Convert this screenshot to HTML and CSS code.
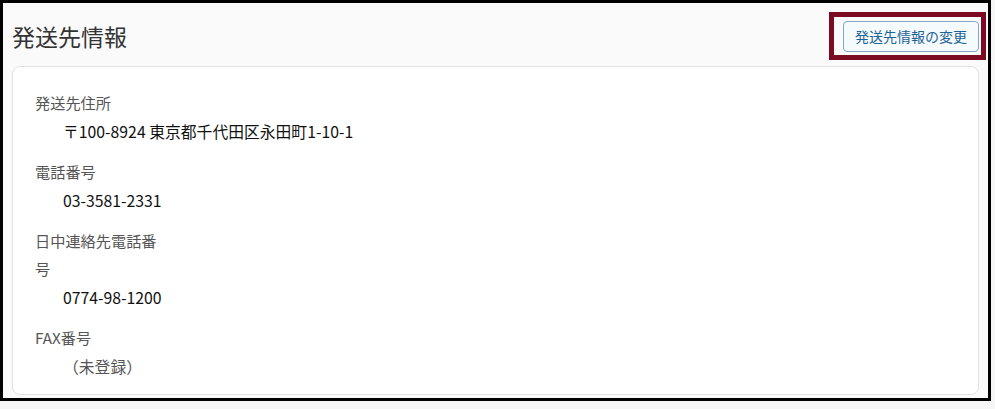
FILE: index.html
```html
<!DOCTYPE html>
<html lang="ja">
<head>
    <meta charset="UTF-8">
    <meta name="viewport" content="width=device-width, initial-scale=1.0">
    <title>発送先情報</title>
    <link rel="stylesheet" href="styles.css">
</head>
<body>
    <div class="frame">
        <div class="section-header">
            <h2 class="section-title">発送先情報</h2>
            <button type="button" class="edit-button">発送先情報の変更</button>
            <!-- 強調枠 -->
            <span class="highlight"></span>
        </div>
        <div class="card">
            <dl class="info-list">
                <div class="info-row">
                    <dt>発送先住所</dt>
                    <dd>〒100-8924 東京都千代田区永田町1-10-1</dd>
                </div>
                <div class="info-row">
                    <dt>電話番号</dt>
                    <dd>03-3581-2331</dd>
                </div>
                <div class="info-row">
                    <dt>日中連絡先電話番号</dt>
                    <dd>0774-98-1200</dd>
                </div>
                <div class="info-row">
                    <dt>FAX番号</dt>
                    <dd class="empty">（未登録）</dd>
                </div>
            </dl>
        </div>
    </div>
</body>
</html>
```

FILE: styles.css
```css
* {
    box-sizing: border-box;
    font-family: 'Noto Sans CJK JP', 'Noto Sans', sans-serif;
}

body {
    margin: 0;
    background-color: #f6f6f6;
}

.frame {
    width: 991px;
    height: 401px;
    border: 3px solid #000;
    background-color: #fafafa;
    padding: 0 9px;
    overflow: hidden;
}

.section-header {
    position: relative;
    display: flex;
    justify-content: space-between;
    align-items: center;
    height: 63px;
    padding-top: 3px;
}

.section-title {
    margin: 0;
    font-size: 23px;
    font-weight: 400;
    color: #333;
}

.edit-button {
    height: 31px;
    width: 136px;
    padding: 0;
    border: 1px solid #7fa9c6;
    border-radius: 4px;
    background-color: #f5fafd;
    color: #1d6496;
    font-size: 14px;
    cursor: pointer;
}

/* 変更ボタンの強調枠 */
.highlight {
    position: absolute;
    left: 817px;
    top: 9px;
    width: 157px;
    height: 48px;
    border: 5px solid #7b0a22;
    pointer-events: none;
}

.card {
    background-color: #fff;
    border: 1px solid #e2e2e2;
    border-radius: 8px;
    padding: 21px 22px 13px 22px;
}

.info-list {
    margin: 0;
}

.info-row {
    margin-bottom: 11px;
}

.info-row:last-child {
    margin-bottom: 0;
}

.info-row dt {
    width: 128px;
    font-size: 15.2px;
    line-height: 28px;
    color: #555;
}

.info-row dd {
    margin: 2px 0 0 28px;
    font-size: 15.8px;
    line-height: 28px;
    color: #111;
}

.info-row dd.empty {
    color: #555;
}
```
